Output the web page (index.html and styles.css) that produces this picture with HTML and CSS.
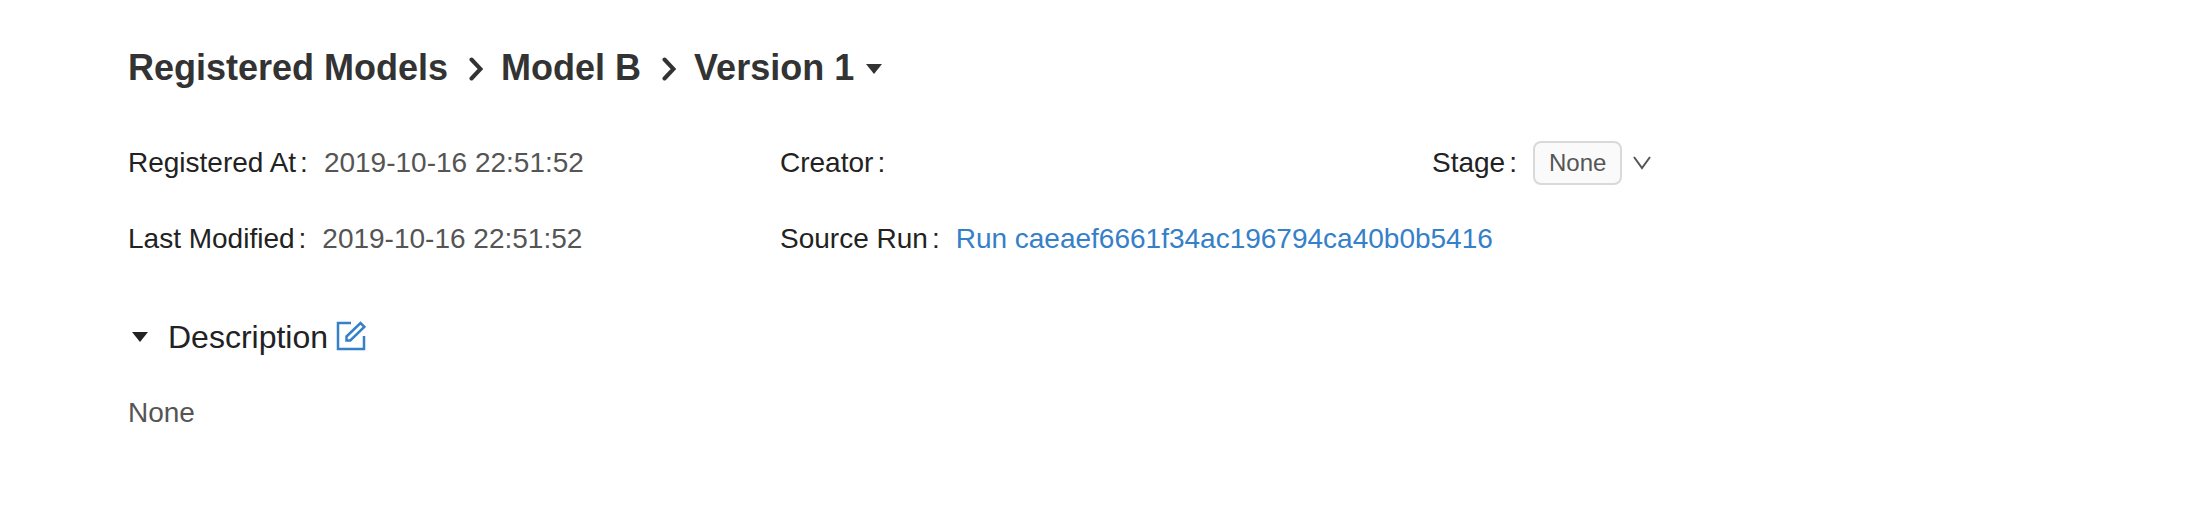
FILE: index.html
```html
<!DOCTYPE html>
<html lang="en">
<head>
<meta charset="utf-8">
<title>Model B, Version 1</title>
<link rel="stylesheet" href="styles.css">
</head>
<body>
<main class="page">
  <h1 class="breadcrumb">
    <a class="crumb" href="#models">Registered Models</a>
    <svg class="chevron" viewBox="0 0 14 24" aria-hidden="true"><path d="M2.500 2.500l9 9.500-9 9.500"/></svg>
    <a class="crumb" href="#model-b">Model B</a>
    <svg class="chevron" viewBox="0 0 14 24" aria-hidden="true"><path d="M2.500 2.500l9 9.500-9 9.500"/></svg>
    <button class="version" type="button">Version 1<svg class="caret" viewBox="0 0 16 10" aria-hidden="true"><path d="M0 0h16L8 10z"/></svg></button>
  </h1>
  <dl class="details">
    <div class="item"><dt>Registered At</dt><dd>2019-10-16 22:51:52</dd></div>
    <div class="item"><dt>Creator</dt><dd></dd></div>
    <div class="item"><dt>Stage</dt><dd><button class="stage" type="button"><span class="tag">None</span><svg class="down" viewBox="0 0 18 14" aria-hidden="true"><path d="M1 1l8 11 8-11"/></svg></button></dd></div>
    <div class="item"><dt>Last Modified</dt><dd>2019-10-16 22:51:52</dd></div>
    <div class="item"><dt>Source Run</dt><dd><a class="link" href="#run">Run caeaef6661f34ac196794ca40b0b5416</a></dd></div>
  </dl>
  <section>
    <h2 class="section-head">
      <button class="toggle" type="button"><svg class="caret" viewBox="0 0 16 10" aria-hidden="true"><path d="M0 0h16L8 10z"/></svg>Description</button>
      <button class="edit" type="button" aria-label="Edit description"><svg viewBox="0 0 30 30" aria-hidden="true"><path d="M15 2H2v26h26V15"/><path d="M10.500 15.500L24.500 2l3.800 3.800-14 13.700h-3.800z"/></svg></button>
    </h2>
    <p class="note">None</p>
  </section>
</main>
</body>
</html>
```
FILE: styles.css
```css
* { box-sizing: border-box; }
body { margin: 0; background: #fff; color: #222; font: 28px/40px "Liberation Sans", Arial, sans-serif; }
button { padding: 0; border: 0; background: none; color: inherit; font: inherit; cursor: pointer; }
.page { padding: 48px 128px; }
.breadcrumb { display: flex; align-items: center; margin: 0; color: #333; font-size: 36px; line-height: 40px; }
.crumb { color: inherit; text-decoration: none; }
.chevron { width: 14px; height: 24px; margin: 2px 18px 0 21px; fill: none; stroke: #333; stroke-width: 4; stroke-linecap: round; }
.caret { width: 16px; height: 10px; fill: currentColor; }
.version { display: flex; align-items: center; gap: 12px; }
.version .caret { margin-top: 2px; }
.details { display: grid; grid-template-columns: repeat(3, minmax(0, 1fr)); row-gap: 32px; margin: 53px 0 56px; }
.item { display: flex; align-items: center; height: 44px; white-space: nowrap; }
dt::after { content: ":"; margin: 0 16px 0 4px; }
dd { margin: 0; color: #555; }
.link { color: #3580c8; text-decoration: none; }
.stage { display: flex; align-items: center; gap: 11px; }
.tag { padding: 0 14px; border: 2px solid #d9d9d9; border-radius: 8px; background: #fafafa; font-size: 24px; }
.down { width: 18px; height: 14px; fill: none; stroke: #555; stroke-width: 2; }
.section-head { display: flex; align-items: center; gap: 8px; margin: 0; font-size: 32px; font-weight: 400; line-height: 40px; }
.toggle { display: flex; align-items: center; gap: 20px; padding-left: 4px; }
.edit { display: flex; padding-bottom: 2px; }
.edit svg { width: 30px; height: 30px; fill: none; stroke: #3580c8; stroke-width: 2.5; }
.note { margin: 36px 0 0; color: #555; }
```
